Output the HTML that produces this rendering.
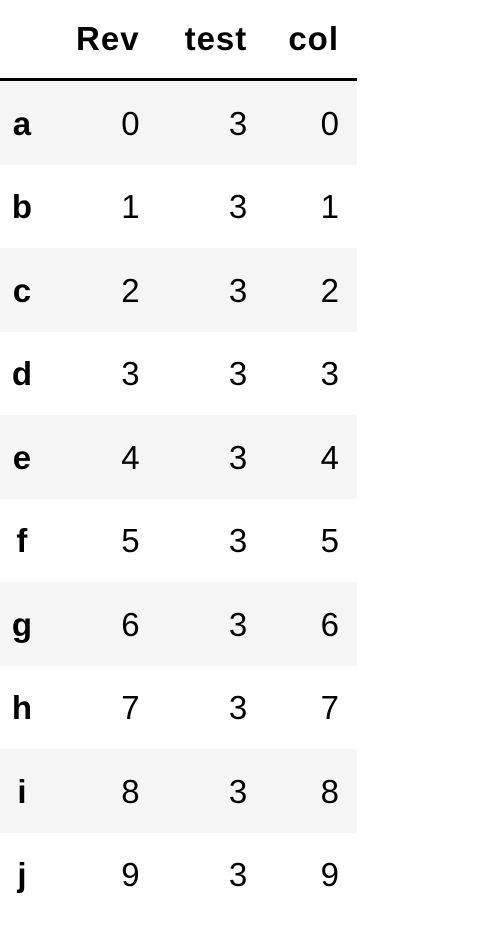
<!DOCTYPE html>
<html><head><style>
html,body{margin:0;padding:0;background:#fff;width:480px;height:938px;overflow:hidden}
table{border-collapse:collapse;font-family:"Liberation Sans",Arial,sans-serif;font-size:33px;color:#000;position:absolute;left:0;top:0;width:357px}
th,td{padding:0;height:81.5px;text-align:right;padding-top:2px}
thead th{height:78px;border-bottom:3px solid #000;vertical-align:middle;letter-spacing:1px;padding-top:0}
tbody th{text-align:center;width:44px}
tbody tr:nth-child(odd){background:#f5f5f5}
</style></head><body>
<table>
<thead><tr><th></th><th style="width:96px">Rev</th><th style="width:108px">test</th><th style="width:92px;padding-right:18px">col</th></tr></thead>
<tbody>
<tr><th>a</th><td>0</td><td>3</td><td style="padding-right:18px">0</td></tr>
<tr><th>b</th><td>1</td><td>3</td><td style="padding-right:18px">1</td></tr>
<tr><th>c</th><td>2</td><td>3</td><td style="padding-right:18px">2</td></tr>
<tr><th>d</th><td>3</td><td>3</td><td style="padding-right:18px">3</td></tr>
<tr><th>e</th><td>4</td><td>3</td><td style="padding-right:18px">4</td></tr>
<tr><th>f</th><td>5</td><td>3</td><td style="padding-right:18px">5</td></tr>
<tr><th>g</th><td>6</td><td>3</td><td style="padding-right:18px">6</td></tr>
<tr><th>h</th><td>7</td><td>3</td><td style="padding-right:18px">7</td></tr>
<tr><th>i</th><td>8</td><td>3</td><td style="padding-right:18px">8</td></tr>
<tr><th>j</th><td>9</td><td>3</td><td style="padding-right:18px">9</td></tr>
</tbody>
</table>
</body></html>
